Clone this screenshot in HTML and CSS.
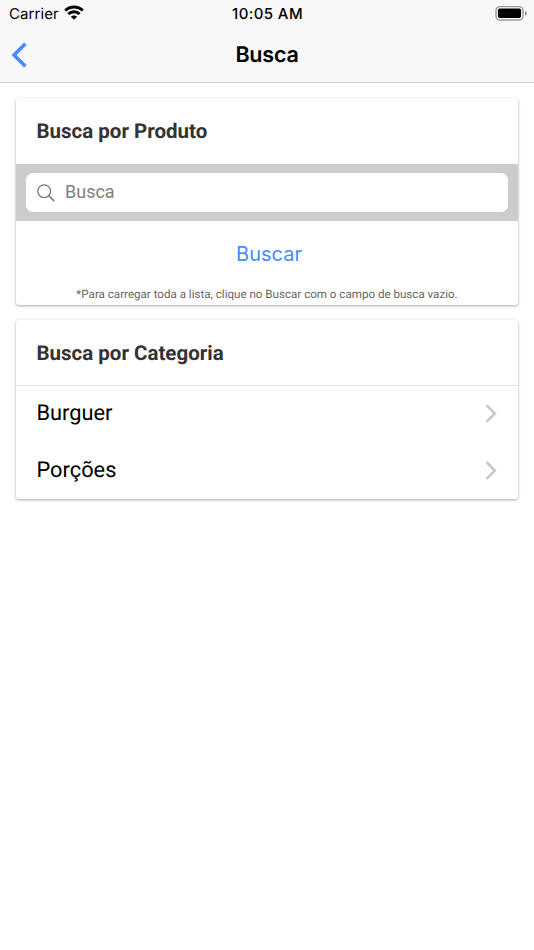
FILE: index.html
```html
<!DOCTYPE html>
<html lang="pt-BR">
<head>
  <meta charset="UTF-8">
  <meta name="viewport" content="width=device-width, initial-scale=1.0">
  <title>Busca</title>
  <link rel="stylesheet" href="styles.css">
</head>
<body>
  <header class="header">
    <div class="status-bar">
      <div class="status-left">
        <span class="carrier">Carrier</span>
        <svg class="wifi" width="20" height="15" viewBox="0 0 20 15" fill="none" stroke="#000" stroke-width="2.9">
          <path d="M1.2 5.5a12.7 12.7 0 0 1 17.6 0"></path>
          <path d="M4.4 9a8 8 0 0 1 11.2 0"></path>
          <path d="M10 14.8l-3.1-3.1a4.4 4.4 0 0 1 6.2 0z" fill="#000" stroke="none"></path>
        </svg>
      </div>
      <span class="time">10:05 AM</span>
      <div class="status-right">
        <svg width="32" height="16" viewBox="0 0 32 16">
          <rect x="1" y="1.6" width="27" height="13.4" rx="3.8" fill="#fff" stroke="#999" stroke-width="1.4"></rect>
          <rect x="2.9" y="3.5" width="23.2" height="9.6" rx="1.8" fill="#000"></rect>
          <path d="M30 5.9q1.8.8 1.8 2.4t-1.8 2.4z" fill="#888"></path>
        </svg>
      </div>
    </div>
    <div class="toolbar">
      <button class="back-btn" aria-label="Voltar">
        <svg width="16" height="26" viewBox="0 0 16 26" fill="none" stroke="currentColor" stroke-width="3.6">
          <path d="M14.4 1.8L3 13l11.4 11.2"></path>
        </svg>
      </button>
      <h1 class="title">Busca</h1>
    </div>
  </header>

  <main class="content">
    <!-- Busca por produto -->
    <section class="card">
      <h2 class="card-title">Busca por Produto</h2>
      <div class="searchbar">
        <label class="search-field">
          <svg width="18" height="18" viewBox="0 0 18 18" fill="none" stroke="#777" stroke-width="1.2">
            <circle cx="7.2" cy="7.2" r="6.4"></circle>
            <path d="M11.8 11.8l5.4 5.3" stroke-width="1.5"></path>
          </svg>
          <input class="search-input" type="text" placeholder="Busca">
        </label>
      </div>
      <button class="search-btn">Buscar</button>
      <p class="note">*Para carregar toda a lista, clique no Buscar com o campo de busca vazio.</p>
    </section>

    <!-- Busca por categoria -->
    <section class="card">
      <h2 class="card-title card-title-line">Busca por Categoria</h2>
      <div class="item">
        <span>Burguer</span>
        <svg class="arrow" width="12" height="19" viewBox="0 0 12 19" fill="none" stroke="currentColor" stroke-width="2.6">
          <path d="M1.5 1.2l8.3 8.3-8.3 8.3"></path>
        </svg>
      </div>
      <div class="item">
        <span>Porções</span>
        <svg class="arrow" width="12" height="19" viewBox="0 0 12 19" fill="none" stroke="currentColor" stroke-width="2.6">
          <path d="M1.5 1.2l8.3 8.3-8.3 8.3"></path>
        </svg>
      </div>
    </section>
  </main>
</body>
</html>
```
FILE: styles.css
```css
* {
  margin: 0;
  padding: 0;
  box-sizing: border-box;
}

body {
  min-height: 100vh;
  background: #ffffff;
  color: #000000;
  font-family: Roboto, "Liberation Sans", sans-serif;
  text-rendering: geometricPrecision;
}

button {
  background: none;
  border: none;
  cursor: pointer;
}

.header {
  height: 83px;
  background: #f8f8f8;
  border-bottom: 1px solid #cccccc;
  font-family: Inter, "Liberation Sans", sans-serif;
}

.status-bar {
  display: grid;
  grid-template-columns: 1fr auto 1fr;
  align-items: center;
  height: 27px;
  padding: 0 8px 0 9px;
  font-size: 15px;
}

.status-left {
  display: flex;
  align-items: center;
  gap: 5px;
}

.carrier {
  letter-spacing: 0.1px;
}

.wifi {
  margin-top: -2px;
}

.time {
  font-weight: 500;
  letter-spacing: 0.4px;
}

.status-right {
  display: flex;
  justify-content: flex-end;
  margin-top: -2px;
  margin-right: -1px;
}

.toolbar {
  display: grid;
  grid-template-columns: 1fr auto 1fr;
  align-items: center;
  height: 55px;
  padding: 0 11px;
}

.back-btn {
  display: flex;
  width: 16px;
  color: #488aff;
}

.title {
  font-size: 21.5px;
  font-weight: 600;
  letter-spacing: -0.2px;
}

.content {
  display: flex;
  flex-direction: column;
  gap: 15px;
  padding: 15px 16px;
}

.card {
  overflow: hidden;
  background: #ffffff;
  border-radius: 3px;
  box-shadow: 0 1px 3px rgba(0, 0, 0, 0.35);
}

.card-title {
  height: 66px;
  padding: 0 20.5px;
  line-height: 68px;
  font-size: 20.5px;
  font-weight: 700;
  color: #333333;
}

.card-title-line {
  height: 66px;
  margin-bottom: -1px;
  border-bottom: 1px solid #e4e4e4;
}

.searchbar {
  height: 57px;
  padding: 9px 10px;
  background: #cccccc;
}

.search-field {
  display: flex;
  align-items: center;
  gap: 10px;
  height: 39px;
  padding: 0 11px;
  background: #ffffff;
  border-radius: 7px;
}

.search-input {
  flex: 1;
  min-width: 0;
  padding-bottom: 2px;
  border: none;
  outline: none;
  background: none;
  font-family: inherit;
  font-size: 18px;
}

.search-input::placeholder {
  color: #808080;
}

.search-btn {
  display: block;
  width: 100%;
  height: 66px;
  padding-left: 4px;
  font-family: Inter, "Liberation Sans", sans-serif;
  font-size: 20px;
  color: #488aff;
}

.note {
  height: 18px;
  line-height: 15px;
  text-align: center;
  font-size: 11.6px;
  color: #666666;
}

.item {
  display: flex;
  align-items: center;
  justify-content: space-between;
  height: 57px;
  padding: 0 21px 1px 20.5px;
  font-size: 21.8px;
}

.arrow {
  margin-top: 1px;
  color: #c8c7cc;
}
```
